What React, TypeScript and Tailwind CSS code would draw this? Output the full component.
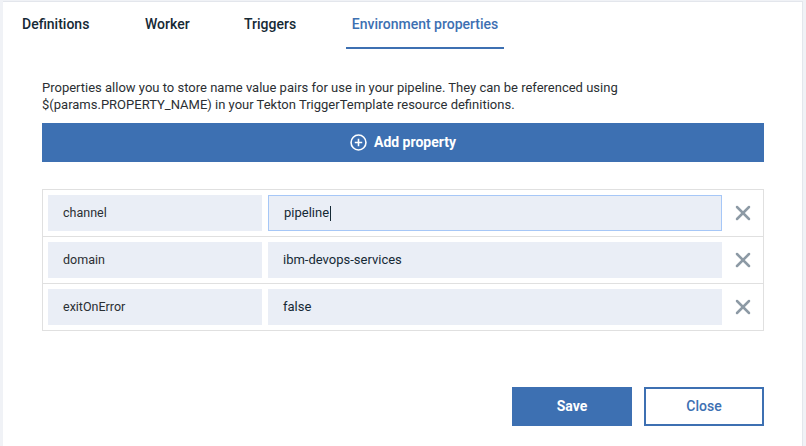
import { X } from "lucide-react"

const rows = [
  { key: "channel", value: "pipeline", focused: true },
  { key: "domain", value: "ibm-devops-services", focused: false },
  { key: "exitOnError", value: "false", focused: false },
]

const tabs = ["Definitions", "Worker", "Triggers", "Environment properties"]

const PlusCircle = () => (
  <svg width="17" height="17" viewBox="0 0 16 16" fill="none" stroke="white" strokeWidth="1.5">
    <circle cx="8" cy="8" r="7" />
    <path d="M8 4.5v7M4.5 8h7" />
  </svg>
)

const App = () => {
  return (
    <div className="w-[806px] h-[446px] bg-[#f0f2f6] pl-[3px] pr-[3px] pt-px overflow-hidden" style={{ fontFamily: 'Roboto, "Noto Sans", sans-serif' }}>
      <div className="h-[445px] bg-white border-t border-r border-[#e3e6ec]">
        <div className="flex pl-[19px] h-[47px] items-stretch">
          <div className="w-[123px] pt-[12px] text-[14px] font-medium text-[#152935]">{tabs[0]}</div>
          <div className="w-[99px] pt-[12px] text-[14px] font-medium text-[#152935]">{tabs[1]}</div>
          <div className="w-[102px] pt-[12px] text-[14px] font-medium text-[#152935]">{tabs[2]}</div>
          <div className="w-[158px] pt-[12px] text-center border-b-2 border-[#3d70b2] text-[14px] font-medium text-[#3d70b2]">{tabs[3]}</div>
        </div>

        <div className="pl-[39px] pr-[38px] pt-[30px]">
          <p className="text-[13px] leading-[17px] text-[#2b2f33]">
            Properties allow you to store name value pairs for use in your pipeline. They can be referenced using
            <br />
            $(params.PROPERTY_NAME) in your Tekton TriggerTemplate resource definitions.
          </p>

          <button className="mt-[10px] w-full h-[39px] bg-[#3d70b2] text-white text-[14px] font-bold flex items-center justify-center gap-[7px]">
            <PlusCircle />
            Add property
          </button>

          <div className="mt-[27px] border border-[#e0e0e0]">
            {rows.map((r, i) => (
              <div key={r.key} className={"flex items-center pl-[5px] " + (i > 0 ? "h-[47px] border-t border-[#e0e0e0]" : "h-[46px]")}>
                <div className="w-[214px] h-[36px] bg-[#eaeef6] flex items-center pl-[15px] text-[12.5px] text-[#2b2f33]">
                  {r.key}
                </div>
                <div
                  className={
                    "ml-[6px] w-[454px] h-[36px] bg-[#eaeef6] flex items-center pl-[15px] text-[13px] text-[#152935] " +
                    (r.focused ? "border border-[#a6c7f7] pl-[14px]" : "")
                  }
                >
                  {r.value}
                  {r.focused && <span className="inline-block w-px h-[15px] bg-[#152935] ml-px" />}
                </div>
                <div className="flex-1 flex items-center justify-center">
                  <X size={24} strokeWidth={2.5} color="#8d9aa5" />
                </div>
              </div>
            ))}
          </div>

          <div className="flex justify-end gap-[12px] mt-[56px]">
            <button className="w-[120px] h-[39px] bg-[#3d70b2] text-white text-[14px] font-bold">Save</button>
            <button className="w-[120px] h-[39px] border-2 border-[#3d70b2] text-[#3d70b2] text-[14px] font-medium bg-white">Close</button>
          </div>
        </div>
      </div>
    </div>
  )
}

export default App
